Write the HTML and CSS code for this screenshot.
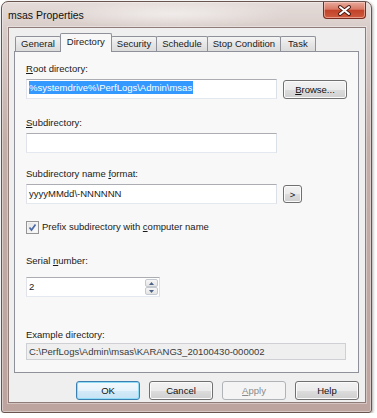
FILE: index.html
```html
<!DOCTYPE html>
<html lang="en">
<head>
    <meta charset="UTF-8">
    <title>msas Properties</title>
    <link rel="stylesheet" href="styles.css">
</head>
<body>
    <div class="window">
        <div class="titlebar">
            <span class="title">msas Properties</span>
            <span class="close-btn">
                <svg width="41" height="15" viewBox="0 0 41 15">
                    <path d="M16 4 L25 11 M25 4 L16 11" stroke="#4a1a12" stroke-width="4" stroke-linecap="round"/>
                    <path d="M16 4 L25 11 M25 4 L16 11" stroke="#ffffff" stroke-width="2" stroke-linecap="round"/>
                </svg>
            </span>
        </div>

        <div class="client">
            <div class="tabs">
                <div class="tab">General</div>
                <div class="tab active">Directory</div>
                <div class="tab">Security</div>
                <div class="tab">Schedule</div>
                <div class="tab">Stop Condition</div>
                <div class="tab tab-last">Task</div>
            </div>

            <div class="panel">
                <div class="label label-root"><u>R</u>oot directory:</div>
                <div class="field-row">
                    <div class="textbox"><span class="selected">%systemdrive%\PerfLogs\Admin\msas</span></div>
                    <button class="btn browse-btn"><u>B</u>rowse...</button>
                </div>

                <div class="label label-sub"><u>S</u>ubdirectory:</div>
                <div class="field-row">
                    <div class="textbox"></div>
                </div>

                <div class="label label-format">Subdirectory name <u>f</u>ormat:</div>
                <div class="field-row">
                    <div class="textbox">yyyyMMdd\-NNNNNN</div>
                    <button class="btn arrow-btn">&gt;</button>
                </div>

                <div class="check-row">
                    <span class="checkbox">
                        <svg width="9" height="9" viewBox="0 0 9 9">
                            <path d="M1.5 4.5 L3.5 7 L7.5 1.5" fill="none" stroke="#4a6aa8" stroke-width="1.7"/>
                        </svg>
                    </span>
                    <span>Prefix subdirectory with <u>c</u>omputer name</span>
                </div>

                <div class="label label-serial">Serial <u>n</u>umber:</div>
                <div class="field-row">
                    <div class="textbox serial">
                        <span class="serial-value">2</span>
                        <span class="spin">
                            <span class="spin-btn">
                                <svg width="5" height="3" viewBox="0 0 5 3"><path d="M0 3 L2.5 0 L5 3 Z" fill="#4d6185"/></svg>
                            </span>
                            <span class="spin-btn">
                                <svg width="5" height="3" viewBox="0 0 5 3"><path d="M0 0 L2.5 3 L5 0 Z" fill="#4d6185"/></svg>
                            </span>
                        </span>
                    </div>
                </div>

                <div class="label label-example">Example directory:</div>
                <div class="example-box">C:\PerfLogs\Admin\msas\KARANG3_20100430-000002</div>
            </div>

            <div class="buttons">
                <button class="btn default">OK</button>
                <button class="btn">Cancel</button>
                <button class="btn disabled"><u>A</u>pply</button>
                <button class="btn">Help</button>
            </div>
        </div>
    </div>
</body>
</html>
```

FILE: styles.css
```css
* {
    box-sizing: border-box;
}

body {
    margin: 0;
    background-color: #ffffff;
    font-family: "Liberation Sans", Arial, sans-serif;
    font-size: 9.5px;
    color: #1a1a1a;
}

u {
    text-decoration: underline;
    text-underline-offset: 1px;
}

/* Window frame */
.window {
    width: 371px;
    height: 412px;
    margin: 1px 0 0 1px;
    display: flex;
    flex-direction: column;
    border: 1px solid #6a5450;
    border-radius: 7px 7px 3px 3px;
    background:
        radial-gradient(ellipse 120px 14px at 170px 12px, rgba(255,255,255,0.55), rgba(255,255,255,0)),
        linear-gradient(to bottom, #e4dcd9 0, #d9cdc9 26px, #c4aea8 140px, #bda49e 100%);
    box-shadow: inset 0 0 0 1px rgba(255,255,255,0.4), 1px 1px 3px rgba(0,0,0,0.35);
}

.titlebar {
    height: 25px;
    display: flex;
    justify-content: space-between;
    align-items: center;
    padding: 0 5px 0 6px;
}

.title {
    font-size: 10.5px;
    color: #111;
    padding-top: 1px;
}

.close-btn {
    align-self: flex-start;
    width: 43px;
    height: 17px;
    border: 1px solid #7b2b1f;
    border-top: none;
    border-radius: 0 0 4px 4px;
    background: linear-gradient(to bottom, #e8aa9c 0%, #d97a66 45%, #c2432a 52%, #cf5a3e 100%);
    box-shadow: inset 0 0 0 1px rgba(255,220,210,0.5);
    display: flex;
    align-items: center;
    justify-content: center;
}

.close-btn svg {
    display: block;
}

/* Client area */
.client {
    flex: 1;
    margin: 0 5px 9px 6px;
    padding: 5px 6px 2px 5px;
    border: 1px solid #8f7b77;
    background-color: #efefef;
    display: flex;
    flex-direction: column;
    box-shadow: 0 0 0 1px rgba(255,255,255,0.35);
}

.tabs {
    display: flex;
    align-items: flex-end;
    height: 19px;
    margin-bottom: -1px;
    padding-left: 1px;
    position: relative;
    z-index: 1;
}

.tab {
    height: 15px;
    margin-bottom: 1px;
    margin-right: -1px;
    padding: 0 5px;
    line-height: 14px;
    border: 1px solid #8e9199;
    border-bottom: none;
    border-radius: 2px 2px 0 0;
    background: linear-gradient(to bottom, #f5f5f5, #e6e6e6 50%, #dcdcdc);
    white-space: nowrap;
}

.tab-last {
    padding: 0 7px;
}

.tab.active {
    height: 19px;
    margin-bottom: 0;
    padding: 0 6px;
    line-height: 15px;
    background: #f8f8f8;
    position: relative;
    z-index: 2;
}

.panel {
    flex: 1;
    border: 1px solid #8e9199;
    background-color: #f8f8f8;
    padding: 11px 11px 0 11px;
}

.label {
    line-height: 12px;
    height: 12px;
}

.label-sub {
    margin-top: 18px;
}

.label-format {
    margin-top: 15px;
}

.label-serial {
    margin-top: 22px;
}

.label-example {
    margin-top: 32px;
}

.field-row {
    display: flex;
    align-items: center;
    gap: 6px;
    margin-top: 4px;
}

.label-serial + .field-row {
    margin-top: 10px;
}

.textbox {
    width: 251px;
    height: 20px;
    border: 1px solid #abadb3;
    border-color: #abadb3 #dbdfe6 #e3e9ef #e2e3ea;
    background-color: #ffffff;
    padding: 0 2px;
    line-height: 18px;
    white-space: nowrap;
    overflow: hidden;
}

.selected {
    display: inline-block;
    background-color: #3399ff;
    color: #ffffff;
    line-height: 13px;
    padding: 0 1px 0 0;
    vertical-align: 1px;
}

.textbox.serial {
    width: 134px;
    display: flex;
    justify-content: space-between;
    padding: 0 0 0 2px;
}

.spin {
    width: 14px;
    display: flex;
    flex-direction: column;
    padding: 1px 1px 1px 0;
}

.spin-btn {
    flex: 1;
    display: flex;
    align-items: center;
    justify-content: center;
    border: 1px solid #c4c8cf;
    border-radius: 2px;
    background: linear-gradient(to bottom, #f7f7f7, #e4e4e4);
}

.spin-btn svg {
    display: block;
}

.check-row {
    display: flex;
    align-items: center;
    gap: 3px;
    height: 12px;
    line-height: 12px;
    margin-top: 17px;
}

.checkbox {
    width: 13px;
    height: 13px;
    border: 1px solid #959595;
    background: linear-gradient(135deg, #e2e2e2, #ffffff);
    box-shadow: inset 0 0 0 1px #f4f4f4;
    display: flex;
    align-items: center;
    justify-content: center;
}

.example-box {
    width: 320px;
    height: 17px;
    margin-top: 2px;
    border: 1px solid #cfd0d3;
    background-color: #efefef;
    padding: 0 2px;
    line-height: 15px;
    color: #3a3a3a;
}

/* Buttons */
.btn {
    width: 64px;
    height: 19px;
    padding: 0;
    font-family: inherit;
    font-size: 9.5px;
    color: #111;
    border: 1px solid #707070;
    border-radius: 3px;
    background: linear-gradient(to bottom, #f2f2f2 0%, #ebebeb 50%, #dddddd 51%, #cfcfcf 100%);
    box-shadow: inset 0 0 0 1px #fbfbfb;
}

.arrow-btn {
    width: 19px;
    height: 18px;
}

.buttons {
    display: flex;
    justify-content: flex-end;
    gap: 9px;
    margin-top: 8px;
}

.btn.default {
    border-color: #3c7fb1;
    background: linear-gradient(to bottom, #f4fafd 0%, #e6f3fb 50%, #d3eaf8 51%, #c6e3f5 100%);
    box-shadow: inset 0 0 0 1px #8fdcf6;
}

.btn.disabled {
    border-color: #b0b4b7;
    background: #f4f4f4;
    color: #8a8a8a;
    box-shadow: none;
}
```
